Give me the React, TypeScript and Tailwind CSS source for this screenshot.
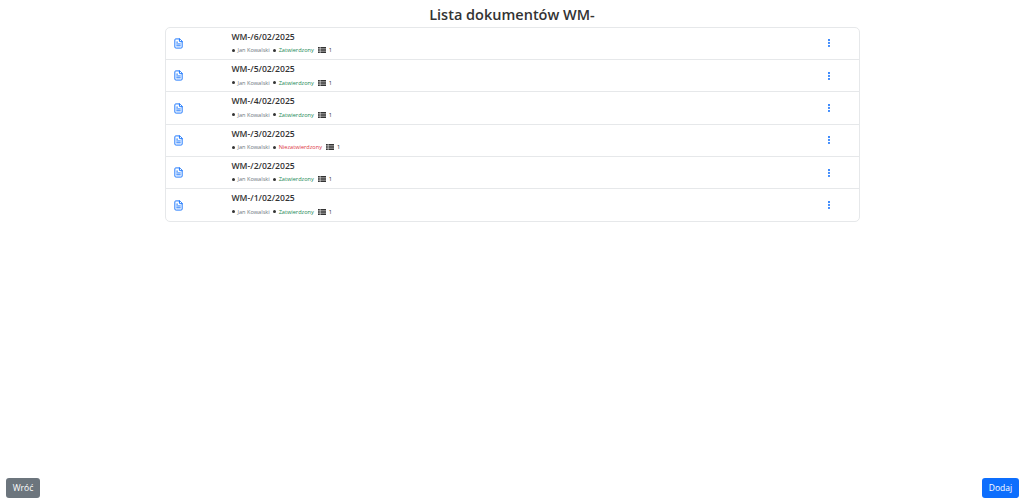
import React from 'react';
import { FileText, MoreVertical } from 'lucide-react';

const docs = [
  { name: 'WM-/6/02/2025', status: 'Zatwierdzony', ok: true },
  { name: 'WM-/5/02/2025', status: 'Zatwierdzony', ok: true },
  { name: 'WM-/4/02/2025', status: 'Zatwierdzony', ok: true },
  { name: 'WM-/3/02/2025', status: 'Niezatwierdzony', ok: false },
  { name: 'WM-/2/02/2025', status: 'Zatwierdzony', ok: true },
  { name: 'WM-/1/02/2025', status: 'Zatwierdzony', ok: true },
];

function Dot() {
  return <span className="w-[3px] h-[3px] rounded-full bg-[#333] inline-block shrink-0" />;
}

// list icon with solid bullets, lucide's one is too thin here
function ListIcon() {
  return (
    <svg viewBox="0 0 8 6" className="w-[8px] h-[6px] ml-[1px] fill-[#333]">
      <rect x="0" y="0" width="1.8" height="1.6" />
      <rect x="0" y="2.2" width="1.8" height="1.6" />
      <rect x="0" y="4.4" width="1.8" height="1.6" />
      <rect x="2.4" y="0" width="5.6" height="1.6" />
      <rect x="2.4" y="2.2" width="5.6" height="1.6" />
      <rect x="2.4" y="4.4" width="5.6" height="1.6" />
    </svg>
  );
}

export default function App() {
  return (
    <div className="h-[503px] flex flex-col bg-white text-[#333] font-['Open_Sans','Noto_Sans',sans-serif] overflow-hidden">
      <h1 className="text-center text-[14.5px] leading-[22.5px] pt-[4px] font-semibold">Lista dokumentów WM-</h1>
      <div className="mx-auto w-[695px] border border-[#e6e8ea] rounded-[5px]">
        {docs.map((d, i) => (
          <div key={d.name} className={`flex items-center pl-[7px] pr-[25px] ${i > 0 ? 'h-[32.3px] border-t border-[#e6e8ea]' : 'h-[31.7px]'}`}>
            <FileText className="w-[11px] h-[11px] text-[#0d6efd] shrink-0" strokeWidth={2} />
            <div className="ml-[48px] flex-1 pb-[1px]">
              <div className="text-[8.6px] leading-[13px] font-semibold">{d.name}</div>
              <div className="flex items-center gap-[3px] text-[5.6px] leading-[10px] mt-[1.5px]">
                <Dot />
                <span className="text-[#6c757d]">Jan Kowalski</span>
                <Dot />
                <span className={d.ok ? 'text-[#198754]' : 'text-[#dc3545]'}>{d.status}</span>
                <ListIcon />
                <span>1</span>
              </div>
            </div>
            <MoreVertical className="w-[10px] h-[10px] text-[#0d6efd]" strokeWidth={3} />
          </div>
        ))}
      </div>
      <div className="mt-auto flex justify-between pl-[6px] pr-[5px] pb-[5px]">
        <button className="h-[20px] w-[34px] rounded-[3px] bg-[#6c757d] text-white text-[8.5px]">Wróć</button>
        <button className="h-[20px] w-[37px] rounded-[3px] bg-[#0d6efd] text-white text-[8.5px]">Dodaj</button>
      </div>
    </div>
  );
}
